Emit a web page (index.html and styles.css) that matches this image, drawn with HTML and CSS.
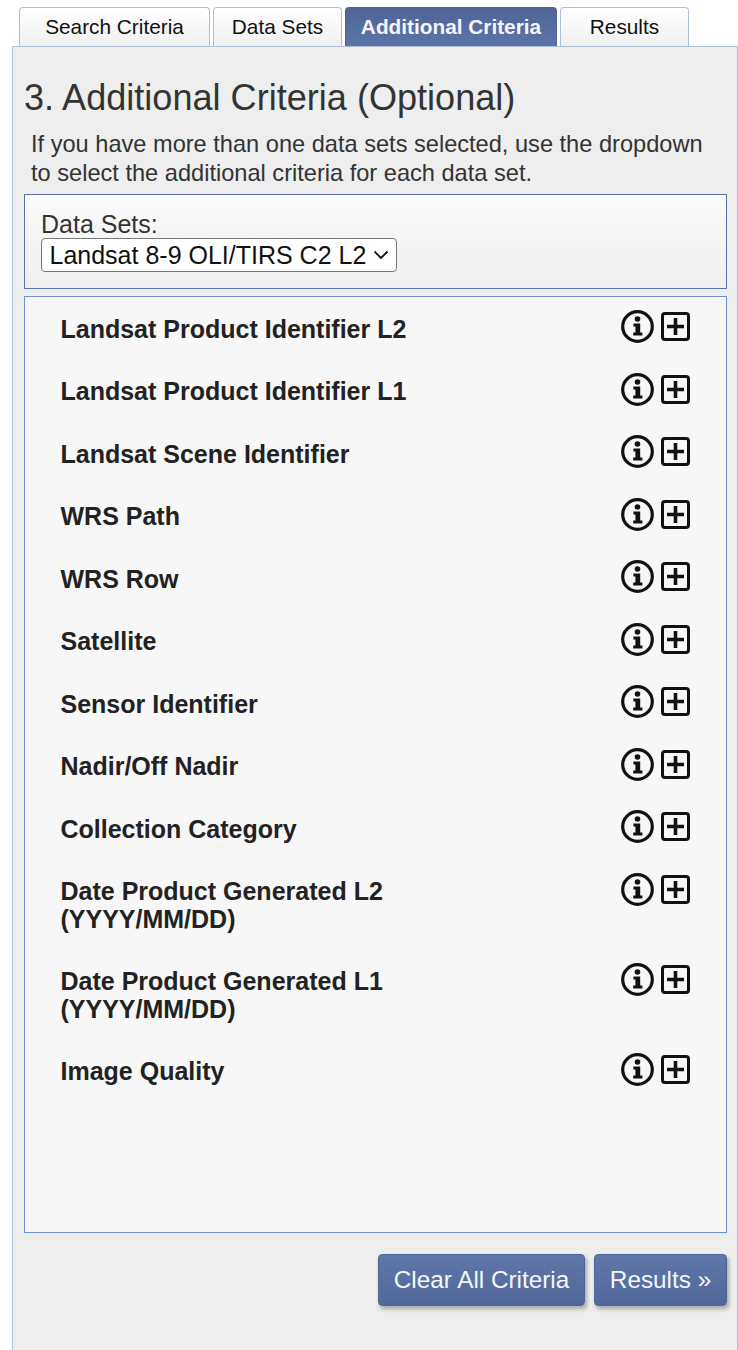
FILE: index.html
```html
<!DOCTYPE html>
<html lang="en">
  <head>
    <meta charset="UTF-8" />
    <title>Additional Criteria</title>
    <link rel="stylesheet" href="styles.css">
  </head>
  <body>
    <svg class="sprites" width="0" height="0" aria-hidden="true">
      <symbol id="icon-info" viewBox="0 0 33 33">
        <circle cx="16.5" cy="16.5" r="14.8" fill="none" stroke="currentColor" stroke-width="3.2" />
        <circle cx="16.5" cy="9" r="2.8" fill="currentColor" />
        <path d="M12.4 13.4h6.8v9h2.2v3.2H12.2v-3.2h2.2v-5.8h-2z" fill="currentColor" />
      </symbol>
      <symbol id="icon-plus" viewBox="0 0 29 29">
        <rect x="1.5" y="1.5" width="26" height="26" rx="2.5" fill="none" stroke="currentColor" stroke-width="3" />
        <path d="M12.7 6h3.6v6.7H23v3.6h-6.7V23h-3.6v-6.7H6v-3.6h6.7z" fill="currentColor" />
      </symbol>
    </svg>

    <ul class="tabs">
      <li class="tab tab-search">Search Criteria</li>
      <li class="tab tab-datasets">Data Sets</li>
      <li class="tab tab-additional active">Additional Criteria</li>
      <li class="tab tab-results">Results</li>
    </ul>

    <div class="panel">
      <h2>3. Additional Criteria (Optional)</h2>
      <p class="intro">If you have more than one data sets selected, use the dropdown to select the additional criteria for each data set.</p>

      <div class="dataset-box">
        <label for="datasetSelect">Data Sets:</label>
        <select id="datasetSelect">
          <option>Landsat 8-9 OLI/TIRS C2 L2</option>
        </select>
      </div>

      <div class="criteria-box">
        <div class="criteria-row">
          <span class="criteria-name">Landsat Product Identifier L2</span>
          <span class="criteria-icons"><svg class="icon-info"><use href="#icon-info" /></svg><svg class="icon-plus"><use href="#icon-plus" /></svg></span>
        </div>
        <div class="criteria-row">
          <span class="criteria-name">Landsat Product Identifier L1</span>
          <span class="criteria-icons"><svg class="icon-info"><use href="#icon-info" /></svg><svg class="icon-plus"><use href="#icon-plus" /></svg></span>
        </div>
        <div class="criteria-row">
          <span class="criteria-name">Landsat Scene Identifier</span>
          <span class="criteria-icons"><svg class="icon-info"><use href="#icon-info" /></svg><svg class="icon-plus"><use href="#icon-plus" /></svg></span>
        </div>
        <div class="criteria-row">
          <span class="criteria-name">WRS Path</span>
          <span class="criteria-icons"><svg class="icon-info"><use href="#icon-info" /></svg><svg class="icon-plus"><use href="#icon-plus" /></svg></span>
        </div>
        <div class="criteria-row">
          <span class="criteria-name">WRS Row</span>
          <span class="criteria-icons"><svg class="icon-info"><use href="#icon-info" /></svg><svg class="icon-plus"><use href="#icon-plus" /></svg></span>
        </div>
        <div class="criteria-row">
          <span class="criteria-name">Satellite</span>
          <span class="criteria-icons"><svg class="icon-info"><use href="#icon-info" /></svg><svg class="icon-plus"><use href="#icon-plus" /></svg></span>
        </div>
        <div class="criteria-row">
          <span class="criteria-name">Sensor Identifier</span>
          <span class="criteria-icons"><svg class="icon-info"><use href="#icon-info" /></svg><svg class="icon-plus"><use href="#icon-plus" /></svg></span>
        </div>
        <div class="criteria-row">
          <span class="criteria-name">Nadir/Off Nadir</span>
          <span class="criteria-icons"><svg class="icon-info"><use href="#icon-info" /></svg><svg class="icon-plus"><use href="#icon-plus" /></svg></span>
        </div>
        <div class="criteria-row">
          <span class="criteria-name">Collection Category</span>
          <span class="criteria-icons"><svg class="icon-info"><use href="#icon-info" /></svg><svg class="icon-plus"><use href="#icon-plus" /></svg></span>
        </div>
        <div class="criteria-row">
          <span class="criteria-name">Date Product Generated L2 (YYYY/MM/DD)</span>
          <span class="criteria-icons"><svg class="icon-info"><use href="#icon-info" /></svg><svg class="icon-plus"><use href="#icon-plus" /></svg></span>
        </div>
        <div class="criteria-row">
          <span class="criteria-name">Date Product Generated L1 (YYYY/MM/DD)</span>
          <span class="criteria-icons"><svg class="icon-info"><use href="#icon-info" /></svg><svg class="icon-plus"><use href="#icon-plus" /></svg></span>
        </div>
        <div class="criteria-row">
          <span class="criteria-name">Image Quality</span>
          <span class="criteria-icons"><svg class="icon-info"><use href="#icon-info" /></svg><svg class="icon-plus"><use href="#icon-plus" /></svg></span>
        </div>
      </div>

      <div class="actions">
        <button class="btn btn-clear">Clear All Criteria</button>
        <button class="btn btn-results">Results »</button>
      </div>
    </div>
  </body>
</html>
```

FILE: styles.css
```css
html,
body {
  margin: 0;
  height: 1350px;
  overflow: hidden;
  background: #fff;
}
body {
  font-family: "Liberation Sans", Arial, sans-serif;
  color: #222;
  padding-top: 7px;
  box-sizing: border-box;
}
.sprites {
  display: block;
  height: 0;
}
.tabs {
  display: flex;
  gap: 3px;
  list-style: none;
  margin: 0;
  padding: 0 0 0 19px;
  height: 39px;
}
.tab {
  box-sizing: border-box;
  height: 39px;
  line-height: 38px;
  text-align: center;
  font-size: 20.8px;
  color: #111;
  background: linear-gradient(#fff, #f0f0f0);
  border: 1px solid #aebfde;
  border-bottom: none;
  border-radius: 4px 4px 0 0;
}
.tab-search {
  width: 191px;
}
.tab-datasets {
  width: 129px;
}
.tab-additional {
  width: 212px;
}
.tab-results {
  width: 129px;
}
.tab.active {
  font-weight: bold;
  color: #f4f6fa;
  background: linear-gradient(#4e6596, #5b74a8);
  border-color: #4e6596;
}
.panel {
  box-sizing: border-box;
  width: 726px;
  height: 1304px;
  margin-left: 12px;
  padding: 0 10px 0 11px;
  background: #eee;
  border: 1px solid #aebfde;
  border-bottom: none;
}
h2 {
  margin: 0;
  padding-top: 28px;
  font-size: 36.1px;
  line-height: 46px;
  font-weight: normal;
  color: #333;
}
.intro {
  margin: 0;
  padding: 9px 7px 6px;
  font-size: 23.6px;
  line-height: 29px;
  color: #333;
}
.dataset-box {
  box-sizing: border-box;
  height: 95px;
  padding: 15px 16px;
  font-size: 25px;
  color: #333;
  background: linear-gradient(#fbfbfb, #eee);
  border: 1px solid #5a74a8;
}
.dataset-box label {
  display: block;
  line-height: 28px;
}
.dataset-box select {
  display: block;
  box-sizing: border-box;
  width: 356px;
  height: 34px;
  padding: 0 0 0 7.5px;
  font-family: inherit;
  font-size: 25px;
  color: #111;
  appearance: none;
  background: #fff url("data:image/svg+xml,%3Csvg xmlns='http://www.w3.org/2000/svg' width='16' height='10'%3E%3Cpath d='M1.5 1.5 8 8l6.5-6.5' fill='none' stroke='%23111' stroke-width='1.8'/%3E%3C/svg%3E") no-repeat right 7px center;
  border: 1px solid #777;
  border-radius: 4px;
}
.criteria-box {
  box-sizing: border-box;
  height: 937px;
  margin-top: 7px;
  padding: 18.5px 36px 0 35.5px;
  background: #f7f7f7;
  border: 1px solid #6f90d0;
}
.criteria-row {
  display: flex;
  justify-content: space-between;
  align-items: flex-start;
  padding-bottom: 35px;
}
.criteria-name {
  width: 400px;
  font-size: 25px;
  line-height: 27.5px;
  font-weight: bold;
  color: #222;
}
.criteria-icons {
  display: flex;
  align-items: center;
  gap: 7px;
  height: 27px;
  margin-top: -2.5px;
  color: #111;
}
.icon-info {
  width: 33px;
  height: 33px;
}
.icon-plus {
  width: 29px;
  height: 29px;
}
.actions {
  display: flex;
  justify-content: flex-end;
  gap: 9px;
  margin-top: 21px;
}
.btn {
  box-sizing: border-box;
  height: 52px;
  padding: 0;
  font-family: inherit;
  font-size: 24.3px;
  color: #f4f6fa;
  background: linear-gradient(#5f78a9, #506899);
  border: 1px solid #4e6596;
  border-radius: 4px;
  box-shadow: 2px 3px 4px rgba(0, 0, 0, 0.3);
}
.btn-clear {
  width: 207px;
}
.btn-results {
  width: 133px;
}
```
